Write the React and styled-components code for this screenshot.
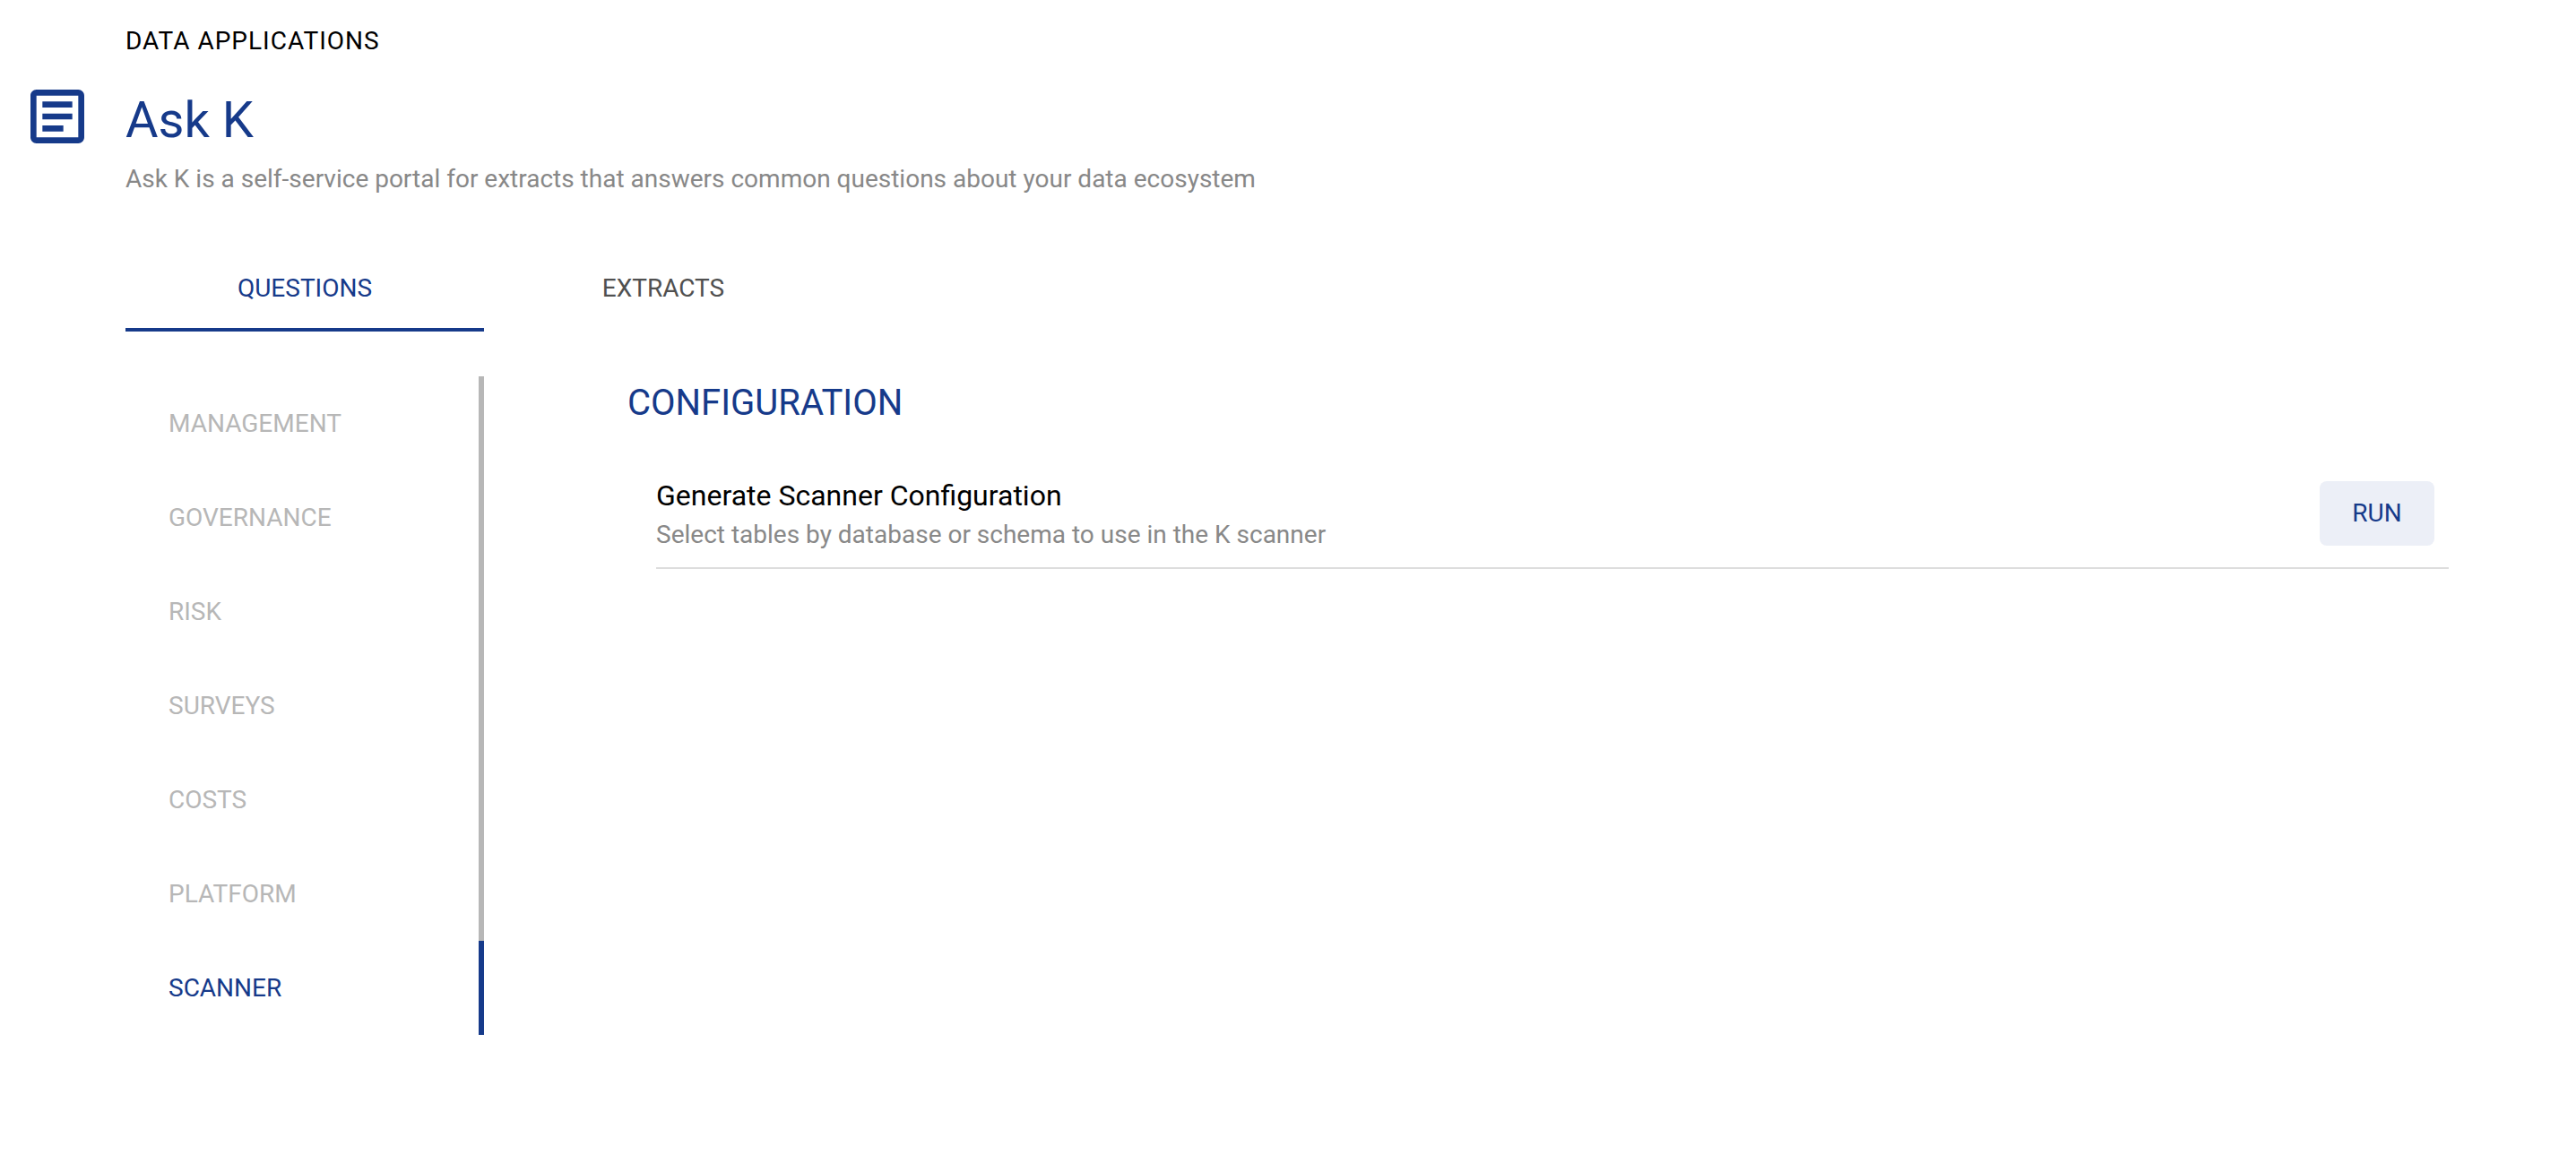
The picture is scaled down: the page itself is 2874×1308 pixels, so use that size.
import React, { useState } from "react";
import styled, { createGlobalStyle } from "styled-components";
import { MdOutlineArticle } from "react-icons/md";

const tabs = ["Questions", "Extracts"];

const categories = [
  "Management",
  "Governance",
  "Risk",
  "Surveys",
  "Costs",
  "Platform",
  "Scanner",
];

const questions = [
  {
    title: "Generate Scanner Configuration",
    text: "Select tables by database or schema to use in the K scanner",
  },
];

const App = () => {
  const [tab, setTab] = useState("Questions");
  const [category, setCategory] = useState("Scanner");

  return (
    <Page>
      <GlobalStyle />
      <Header>
        <Eyebrow>Data Applications</Eyebrow>
        <IconBox>
          <MdOutlineArticle size={80} />
        </IconBox>
        <Heading>
          <Title>Ask K</Title>
          <Description>
            Ask K is a self-service portal for extracts that answers common
            questions about your data ecosystem
          </Description>
        </Heading>
      </Header>
      <Main>
        <Tabs role="tablist">
          {tabs.map((name) => (
            <Tab
              key={name}
              role="tab"
              aria-selected={tab === name}
              $active={tab === name}
              onClick={() => setTab(name)}
            >
              {name}
            </Tab>
          ))}
        </Tabs>
        <Content>
          <Sidebar>
            {categories.map((name) => (
              <SidebarItem
                key={name}
                $active={category === name}
                onClick={() => setCategory(name)}
              >
                {name}
              </SidebarItem>
            ))}
          </Sidebar>
          <Section>
            <SectionTitle>Configuration</SectionTitle>
            <QuestionList>
              {questions.map(({ title, text }) => (
                <Question key={title}>
                  <div>
                    <QuestionTitle>{title}</QuestionTitle>
                    <QuestionText>{text}</QuestionText>
                  </div>
                  <RunButton>Run</RunButton>
                </Question>
              ))}
            </QuestionList>
          </Section>
        </Content>
      </Main>
    </Page>
  );
};

const GlobalStyle = createGlobalStyle`
  * {
    box-sizing: border-box;
    margin: 0;
    padding: 0;
  }

  body {
    background-color: #fff;
    color: #000;
    font-family: Roboto, sans-serif;
    font-size: 28px;
    line-height: 40px;
  }
`;

const Page = styled.div`
  padding: 26px 142px 40px 0;
`;

const Header = styled.header`
  display: grid;
  grid-template-columns: 140px 1fr;
`;

const Eyebrow = styled.p`
  grid-column: 2;
  letter-spacing: 1px;
  text-transform: uppercase;
`;

const IconBox = styled.div`
  padding: 24px 0 0 24px;
  color: #163a8a;

  svg {
    display: block;
  }
`;

const Heading = styled.div`
  padding-top: 32px;
`;

const Title = styled.h1`
  color: #163a8a;
  font-size: 56px;
  font-weight: 400;
  line-height: 72px;
`;

const Description = styled.p`
  padding-top: 10px;
  color: #888;
`;

const Main = styled.main`
  padding: 58px 0 0 140px;
`;

const Button = styled.button`
  border: none;
  background: none;
  font: inherit;
  text-transform: uppercase;
  cursor: pointer;
`;

const Tabs = styled.div`
  display: flex;
`;

const Tab = styled(Button)`
  width: 400px;
  height: 92px;
  border-bottom: 4px solid
    ${({ $active }) => ($active ? "#163a8a" : "transparent")};
  color: ${({ $active }) => ($active ? "#163a8a" : "#505050")};
`;

const Content = styled.div`
  display: flex;
  align-items: flex-start;
  gap: 160px;
  padding-top: 50px;
`;

const Sidebar = styled.nav`
  display: flex;
  flex-direction: column;
  flex-shrink: 0;
  width: 400px;
`;

const SidebarItem = styled(Button)`
  height: 105px;
  padding-left: 48px;
  border-right: 6px solid ${({ $active }) => ($active ? "#163a8a" : "#b7b7b7")};
  color: ${({ $active }) => ($active ? "#163a8a" : "#b7b7b7")};
  text-align: left;
`;

const Section = styled.section`
  flex: 1;
  padding-top: 6px;
`;

const SectionTitle = styled.h2`
  color: #163a8a;
  font-size: 40px;
  font-weight: 400;
  line-height: 48px;
  text-transform: uppercase;
`;

const QuestionList = styled.ul`
  padding: 55px 0 0 32px;
  list-style: none;
`;

const Question = styled.li`
  display: flex;
  justify-content: space-between;
  align-items: center;
  padding: 0 16px 16px 0;
  border-bottom: 2px solid #ddd;
`;

const QuestionTitle = styled.h3`
  font-size: 32px;
  font-weight: 400;
  line-height: 48px;
`;

const QuestionText = styled.p`
  color: #888;
`;

const RunButton = styled(Button)`
  width: 128px;
  height: 72px;
  border-radius: 8px;
  background-color: #eceff7;
  color: #163a8a;
`;

export default App;
